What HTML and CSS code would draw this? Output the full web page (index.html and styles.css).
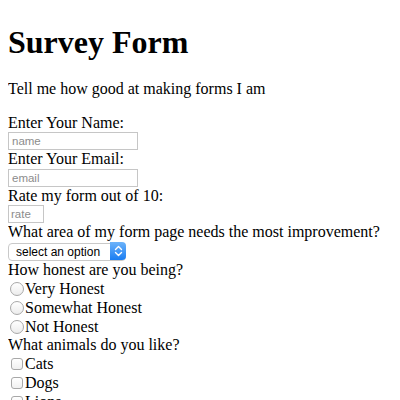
FILE: index.html
```html
<!DOCTYPE html>
<html>
<head>
<meta charset="utf-8">
<link rel="stylesheet" href="styles.css">
</head>
<body>
<h1 class="title">Survey Form</h1>
<p class="intro">Tell me how good at making forms I am</p>
<form class="survey">
  <label class="q" for="name">Enter Your Name:</label>
  <input class="field" id="name" type="text" placeholder="name">
  <label class="q" for="email">Enter Your Email:</label>
  <input class="field" id="email" type="text" placeholder="email">
  <label class="q" for="rate">Rate my form out of 10:</label>
  <input class="field rate" id="rate" type="text" placeholder="rate">
  <label class="q" for="area">What area of my form page needs the most improvement?</label>
  <div class="select-row">
    <span class="select-wrap">
      <select id="area" class="select"><option>select an option</option></select>
      <span class="stepper"><svg width="9" height="12" viewBox="0 0 9 12"><path d="M1.5 4.5 L4.5 1.5 L7.5 4.5 M1.5 7.5 L4.5 10.5 L7.5 7.5" fill="none" stroke="#fff" stroke-width="1.4" stroke-linecap="round" stroke-linejoin="round"/></svg></span>
    </span>
  </div>
  <div class="q">How honest are you being?</div>
  <label class="opt"><input class="radio" type="radio" name="h">Very Honest</label>
  <label class="opt"><input class="radio" type="radio" name="h">Somewhat Honest</label>
  <label class="opt"><input class="radio" type="radio" name="h">Not Honest</label>
  <div class="q">What animals do you like?</div>
  <label class="opt"><input class="check" type="checkbox">Cats</label>
  <label class="opt"><input class="check" type="checkbox">Dogs</label>
  <label class="opt"><input class="check" type="checkbox">Lions</label>
</form>
</body>
</html>
```

FILE: styles.css
```css
body {
  margin: 8px;
  font-family: "Liberation Serif", "Times New Roman", serif;
  font-size: 16px;
  color: #000;
  background: #fff;
}
.title {
  font-size: 32px;
  font-weight: bold;
  margin: 16px 0 19px;
}
.intro {
  margin: 16px 0;
}
.survey {
  display: flex;
  flex-direction: column;
  align-items: flex-start;
}
.q {
  display: block;
  line-height: 18.4px;
}
.field {
  box-sizing: border-box;
  width: 130px;
  height: 18px;
  margin: 0;
  padding: 1px 3px;
  border: 1px solid #c6c6c6;
  font-family: "Liberation Sans", Arial, sans-serif;
  font-size: 11.5px;
  background: #fff;
  outline: none;
}
.field::placeholder {
  color: #8c8c8c;
}
.rate {
  width: 36px;
  padding: 1px 2px;
}
.select-row {
  height: 19px;
  display: flex;
  align-items: center;
}
.select-wrap {
  position: relative;
  display: inline-block;
  height: 18px;
}
.select {
  appearance: none;
  -webkit-appearance: none;
  box-sizing: border-box;
  width: 118px;
  height: 18px;
  margin: 0;
  padding: 0 20px 0 7px;
  border: 1px solid #c9c9c9;
  border-radius: 4px;
  background: #fff;
  font-family: "Liberation Sans", Arial, sans-serif;
  font-size: 12px;
  color: #000;
  outline: none;
}
.stepper {
  position: absolute;
  right: 0;
  top: 0;
  width: 16px;
  height: 18px;
  border-radius: 0 4px 4px 0;
  background: linear-gradient(#6cb3fa, #1a7df2);
  display: flex;
  align-items: center;
  justify-content: center;
}
.opt {
  height: 19px;
  display: flex;
  align-items: center;
}
.radio {
  appearance: none;
  -webkit-appearance: none;
  box-sizing: border-box;
  width: 14px;
  height: 14px;
  margin: 0 1px 0 2px;
  border: 1px solid #a8a8a8;
  border-radius: 50%;
  background: linear-gradient(#fff, #ececec);
}
.check {
  appearance: none;
  -webkit-appearance: none;
  box-sizing: border-box;
  width: 12px;
  height: 12px;
  margin: 0 2px 0 3px;
  border: 1px solid #a8a8a8;
  border-radius: 3px;
  background: linear-gradient(#fff, #f0f0f0);
}
```
